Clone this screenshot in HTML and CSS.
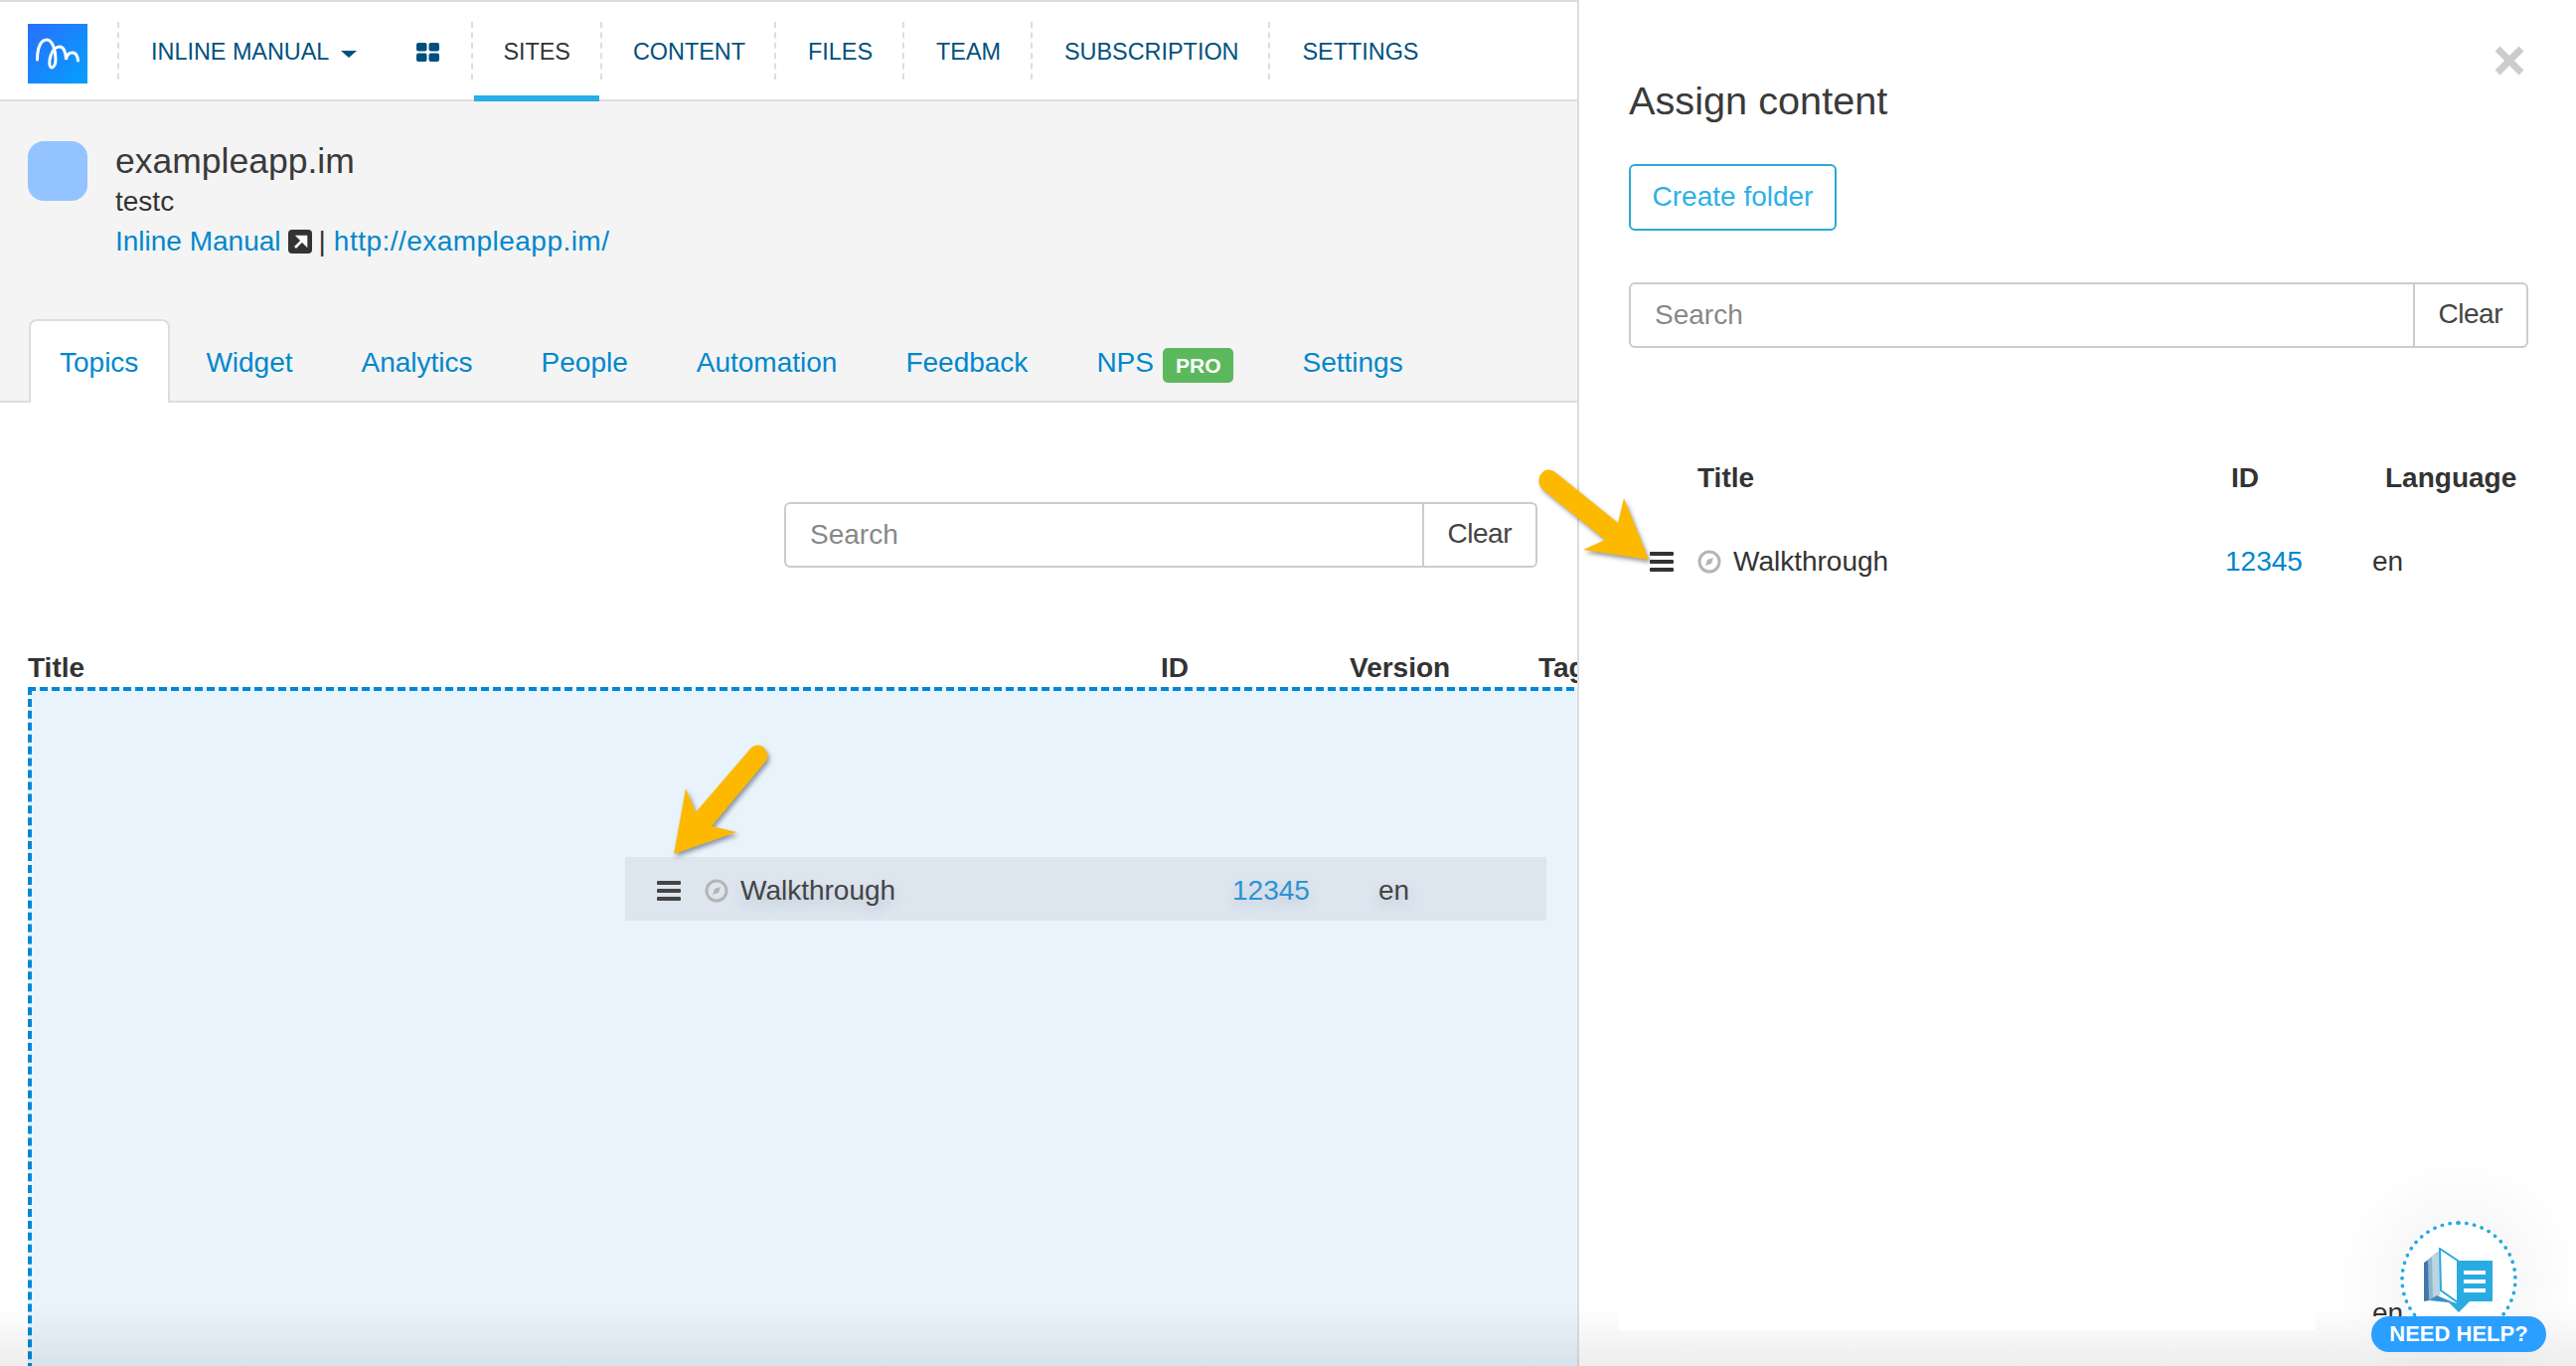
FILE: index.html
```html
<!DOCTYPE html>
<html lang="en">
<head>
<meta charset="utf-8">
<title>Assign content</title>
<link rel="stylesheet" href="styles.css">
</head>
<body>
<div class="app">
  <section class="left">
    <nav class="topbar">
      <a class="logo"><svg viewBox="0 0 60 60" width="60" height="60"><defs><linearGradient id="lg" x1="0" y1="0" x2="1" y2="1"><stop offset="0" stop-color="#2a6fff"/><stop offset="1" stop-color="#05a0fb"/></linearGradient></defs><rect width="60" height="60" fill="url(#lg)"/><path d="M9.5 36C9.5 24 13 16 19 16C25 16 28 27 28 36C28 41 26 44 24 44C21.5 44 21 38 23 32C25 26 28 23 32 23C36 23 38 28 38.5 36C39 31 42 29 45 29C48 29 50 32 50.5 37" fill="none" stroke="#fff" stroke-width="3" stroke-linecap="round"/></svg></a>
      <i class="sep"></i>
      <a class="nav-item account">INLINE MANUAL<span class="caret"></span>
        <svg class="apps" viewBox="0 0 23 19" width="23" height="19"><rect width="10.5" height="8.5" rx="2"/><rect x="12.5" width="10.5" height="8.5" rx="2"/><rect y="10.5" width="10.5" height="8.5" rx="2"/><rect x="12.5" y="10.5" width="10.5" height="8.5" rx="2"/></svg>
      </a>
      <i class="sep"></i>
      <a class="nav-item active">SITES</a>
      <i class="sep"></i>
      <a class="nav-item tight">CONTENT</a>
      <i class="sep"></i>
      <a class="nav-item">FILES</a>
      <i class="sep"></i>
      <a class="nav-item">TEAM</a>
      <i class="sep"></i>
      <a class="nav-item">SUBSCRIPTION</a>
      <i class="sep"></i>
      <a class="nav-item">SETTINGS</a>
    </nav>

    <header class="site">
      <div class="site-info">
        <div class="avatar"></div>
        <div class="site-text">
          <h1>exampleapp.im</h1>
          <p class="owner">testc</p>
          <p class="links"><a>Inline Manual</a><svg class="ext" viewBox="0 0 24 24" width="24" height="24"><rect width="24" height="24" rx="4" fill="#333"/><path d="M7 18L16.5 8.5M10 7h8v8z" fill="#fff" stroke="#fff" stroke-width="2.6"/></svg><span class="pipe">|</span><a class="url">http://exampleapp.im/</a></p>
        </div>
      </div>
      <div class="tabs">
        <a class="tab current">Topics</a>
        <a class="tab">Widget</a>
        <a class="tab">Analytics</a>
        <a class="tab">People</a>
        <a class="tab">Automation</a>
        <a class="tab">Feedback</a>
        <a class="tab">NPS<b class="pro">PRO</b></a>
        <a class="tab">Settings</a>
      </div>
    </header>

    <div class="search main-search">
      <div class="search-input">Search</div>
      <div class="search-btn">Clear</div>
    </div>

    <div class="list-head">
      <span>Title</span><span>ID</span><span>Version</span><span>Tags</span>
    </div>

    <div class="dropzone">
      <div class="drag-row">
        <svg class="burger" viewBox="0 0 24 20" width="24" height="20"><rect y="0" width="24" height="4" rx="1"/><rect y="8" width="24" height="4" rx="1"/><rect y="16" width="24" height="4" rx="1"/></svg>
        <svg class="compass" viewBox="0 0 24 24" width="24" height="24"><circle cx="12" cy="12" r="10" fill="none" stroke="#b5b5b5" stroke-width="3"/><path d="M16 8L14 14L8 16L10 10z" fill="#b5b5b5"/></svg>
        <span class="r-title">Walkthrough</span>
        <a class="r-id">12345</a>
        <span class="r-lang">en</span>
      </div>
    </div>
  </section>

  <aside class="right">
    <div class="panel-head">
      <h2>Assign content</h2>
      <svg class="close" viewBox="0 0 32 32" width="32" height="32"><path d="M4 4L28 28M28 4L4 28" stroke="#ccc" stroke-width="7"/></svg>
    </div>
    <a class="create">Create folder</a>
    <div class="search panel-search">
      <div class="search-input">Search</div>
      <div class="search-btn">Clear</div>
    </div>
    <div class="panel-list-head"><span>Title</span><span>ID</span><span>Language</span></div>
    <div class="panel-row">
      <svg class="burger" viewBox="0 0 24 20" width="24" height="20"><rect y="0" width="24" height="4" rx="1"/><rect y="8" width="24" height="4" rx="1"/><rect y="16" width="24" height="4" rx="1"/></svg>
      <svg class="compass" viewBox="0 0 24 24" width="24" height="24"><circle cx="12" cy="12" r="10" fill="none" stroke="#b5b5b5" stroke-width="3"/><path d="M16 8L14 14L8 16L10 10z" fill="#b5b5b5"/></svg>
      <span>Walkthrough</span>
      <a>12345</a>
      <span>en</span>
    </div>
  </aside>
</div>

<svg class="arrow arrow-main" viewBox="0 0 110 125" width="110" height="125"><path d="M86 7C92 2 98 5 100 9C103 13 103 17 101 20L46 86L71 92L8 114L20 48L30 72Z" fill="#fdb900"/></svg>
<svg class="arrow arrow-panel" viewBox="0 0 120 100" width="120" height="100"><path d="M21 8L83 58L89 33L114 95L48 85L70 75L8 25C2 20 2 12 7 7C11 3 17 4 21 8Z" fill="#fdb900"/></svg>

<div class="fade"></div>
<div class="fade-patch"></div>
<div class="help-glow"></div>
<span class="peek">en</span>
<div class="help-circle">
  <svg viewBox="0 0 72 68" width="72" height="68">
    <path d="M1 15L12 8V52L1 54Z" fill="#3f77a8"/>
    <path d="M5 12L15 4V50L6 53Z" fill="#8fb6cc"/>
    <path d="M9 9L17 3V48L10 51Z" fill="#b9d6e2"/>
    <path d="M17 1L35 13V55L18 43Z" fill="#fff" stroke="#29abe2" stroke-width="2"/>
    <path d="M6 53L14 48L35 57L25 55Z" fill="#3f8fbe"/>
    <path d="M35 13H70V54H47L36 65L25 54L35 56Z" fill="#29abe2"/>
    <path d="M41 25H63M41 34H63M41 43H63" stroke="#fff" stroke-width="4"/>
  </svg>
</div>
<div class="help-pill">NEED HELP?</div>
</body>
</html>
```
FILE: styles.css
```css
* { box-sizing: border-box; }
html, body { margin: 0; height: 1374px; overflow: hidden; background: #fff; }
body { font-family: "Liberation Sans", Arial, sans-serif; font-size: 28px; color: #333; position: relative; }
a { color: #0087cd; text-decoration: none; }
h1, h2, p { margin: 0; font-weight: normal; }

.app { display: flex; width: 2592px; height: 1374px; }
.left { width: 1589px; flex: none; height: 1374px; overflow: hidden; border-right: 2px solid #ddd; }
.right { flex: 1; min-width: 0; padding-left: 50px; }

/* top bar */
.topbar { display: flex; align-items: flex-start; height: 102px; border-top: 2px solid #ddd; border-bottom: 2px solid #ddd; padding-left: 28px; }
.logo { display: block; width: 60px; height: 60px; margin: 22px 30px 0 0; }
.logo svg { display: block; }
.sep { display: block; flex: none; width: 0; height: 58px; margin-top: 20px; border-left: 2px dashed #ddd; }
.nav-item { display: flex; align-items: center; height: 60px; margin-top: 20px; padding: 0 30px 0 32px; font-size: 23.4px; color: #00507e; white-space: nowrap; }
.nav-item.account { padding-right: 31px; }
.nav-item.tight { padding: 0 29px 0 31px; }
.nav-item.active { color: #333; height: 100px; margin: 0 1px -2px; padding: 6px 29px 0 29px; border-bottom: 6px solid #27aee6; }
.caret { width: 0; height: 0; margin-left: 12px; margin-top: 4px; border-left: 8px solid transparent; border-right: 8px solid transparent; border-top: 7px solid #00507e; }
.apps { margin-left: 60px; margin-right: 1px; fill: #00507e; }

/* site header */
.site { background: #f4f4f4; height: 303px; display: flex; flex-direction: column; justify-content: space-between; }
.site-info { display: flex; padding: 40px 0 0 28px; gap: 28px; }
.avatar { width: 60px; height: 60px; background: #93c4ff; border-radius: 16px; }
.site-text { margin-top: -1px; }
.site-text h1 { font-size: 35.5px; line-height: 42px; color: #3a3a3a; }
.owner { line-height: 36px; margin-top: 2px; }
.links { display: flex; align-items: center; line-height: 36px; margin-top: 4px; }
.url { letter-spacing: .47px; }
.ext { margin: 0 0 0 7px; }
.pipe { margin: 0 8px 0 7px; color: #333; }
.tabs { display: flex; gap: 3px; padding-left: 29px; height: 85px; border-bottom: 2px solid #ddd; align-items: flex-start; }
.tab { display: flex; align-items: center; height: 83px; padding: 12px 33px 6px; white-space: nowrap; }
.tab.current { color: #0087cd; background: #fff; border: 2px solid #ddd; border-bottom: 0; border-radius: 8px 8px 0 0; padding: 5px 30px 4px 29px; margin-top: 1px; height: 84px; }
.pro { background: #5cb85c; color: #fff; font-size: 21px; line-height: 35px; padding: 0 13px; border-radius: 5px; margin-left: 9px; margin-top: 6px; }

/* search */
.search { display: flex; height: 66px; }
.search-input { flex: 1; border: 2px solid #ccc; border-radius: 6px 0 0 6px; padding: 0 24px; line-height: 62px; color: #888; }
.search-btn { margin-left: -2px; border: 2px solid #ccc; border-radius: 0 6px 6px 0; padding: 0 24px; line-height: 60px; color: #444; letter-spacing: -.5px; }
.main-search { width: 758px; margin: 100px 40px 0 auto; }

/* list */
.list-head { display: grid; grid-template-columns: 1140px 190px 190px 100px; width: 1650px; padding: 2px 0 0 28px; margin-top: 83px; height: 37px; font-weight: bold; line-height: 32px; white-space: nowrap; }
.dropzone { position: relative; width: 1700px; height: 700px; margin-left: 28px; background: #e8f3fc; border-top: 4px dashed #0088d6; border-left: 4px dashed #0088d6; }
.drag-row { position: absolute; left: 597px; top: 167px; width: 927px; height: 64px; padding-top: 3px; background: #dde6ef; display: flex; align-items: center; color: #444; text-shadow: 0 6px 14px rgba(40,60,90,.18); }
.drag-row .burger { margin-left: 32px; fill: #444; }
.drag-row .compass { margin-left: 24px; }
.r-title { margin-left: 12px; width: 495px; }
.r-id { width: 147px; color: #2b93d5; }
.burger { fill: #333; flex: none; }
.compass { flex: none; }

/* right panel */
.panel-head { display: flex; justify-content: space-between; align-items: flex-start; padding: 45px 51px 0 0; }
.panel-head h2 { font-size: 39.7px; line-height: 48px; margin-top: 32px; color: #3a3a3a; }
.create { display: block; width: 209px; height: 67px; margin-top: 40px; border: 2px solid #29a9d8; border-radius: 6px; color: #2db0e5; line-height: 62px; text-align: center; }
.panel-search { width: 905px; margin-top: 52px; }
.panel-list-head { display: grid; grid-template-columns: 537px 155px auto; padding-left: 69px; margin-top: 115px; font-weight: bold; line-height: 32px; }
.panel-row { display: grid; grid-template-columns: 48px 36px 495px 148px auto; align-items: center; padding-left: 21px; margin-top: 52px; height: 32px; line-height: 32px; }

/* annotations */
.arrow { position: absolute; filter: drop-shadow(2px 3px 2px rgba(50,60,70,.5)); }
.arrow-main { left: 670px; top: 745px; }
.arrow-panel { left: 1545px; top: 468px; }

/* overlays */
.fade { position: absolute; left: 0; right: 0; bottom: 0; height: 60px; background: linear-gradient(rgba(0,0,0,0), rgba(0,0,0,.07)); }
.fade-patch { position: absolute; left: 1628px; top: 1262px; width: 702px; height: 76px; background: #fff; }
.help-glow { position: absolute; left: 2330px; top: 1170px; width: 262px; height: 204px; background: radial-gradient(circle at 144px 117px, rgba(0,0,0,.05), rgba(0,0,0,0) 125px); }
.peek { position: absolute; left: 2387px; top: 1305px; height: 19px; overflow: hidden; line-height: 32px; color: #333; }
.help-circle { position: absolute; left: 2415px; top: 1228px; width: 118px; height: 118px; border-radius: 50%; background: #fff; border: 4px dotted #29abe2; }
.help-circle svg { position: absolute; left: 19px; top: 23px; }
.help-pill { position: absolute; left: 2386px; top: 1324px; width: 176px; height: 36px; border-radius: 18px; background: #2b9fff; color: #fff; font-size: 22px; font-weight: bold; line-height: 36px; text-align: center; }
```
